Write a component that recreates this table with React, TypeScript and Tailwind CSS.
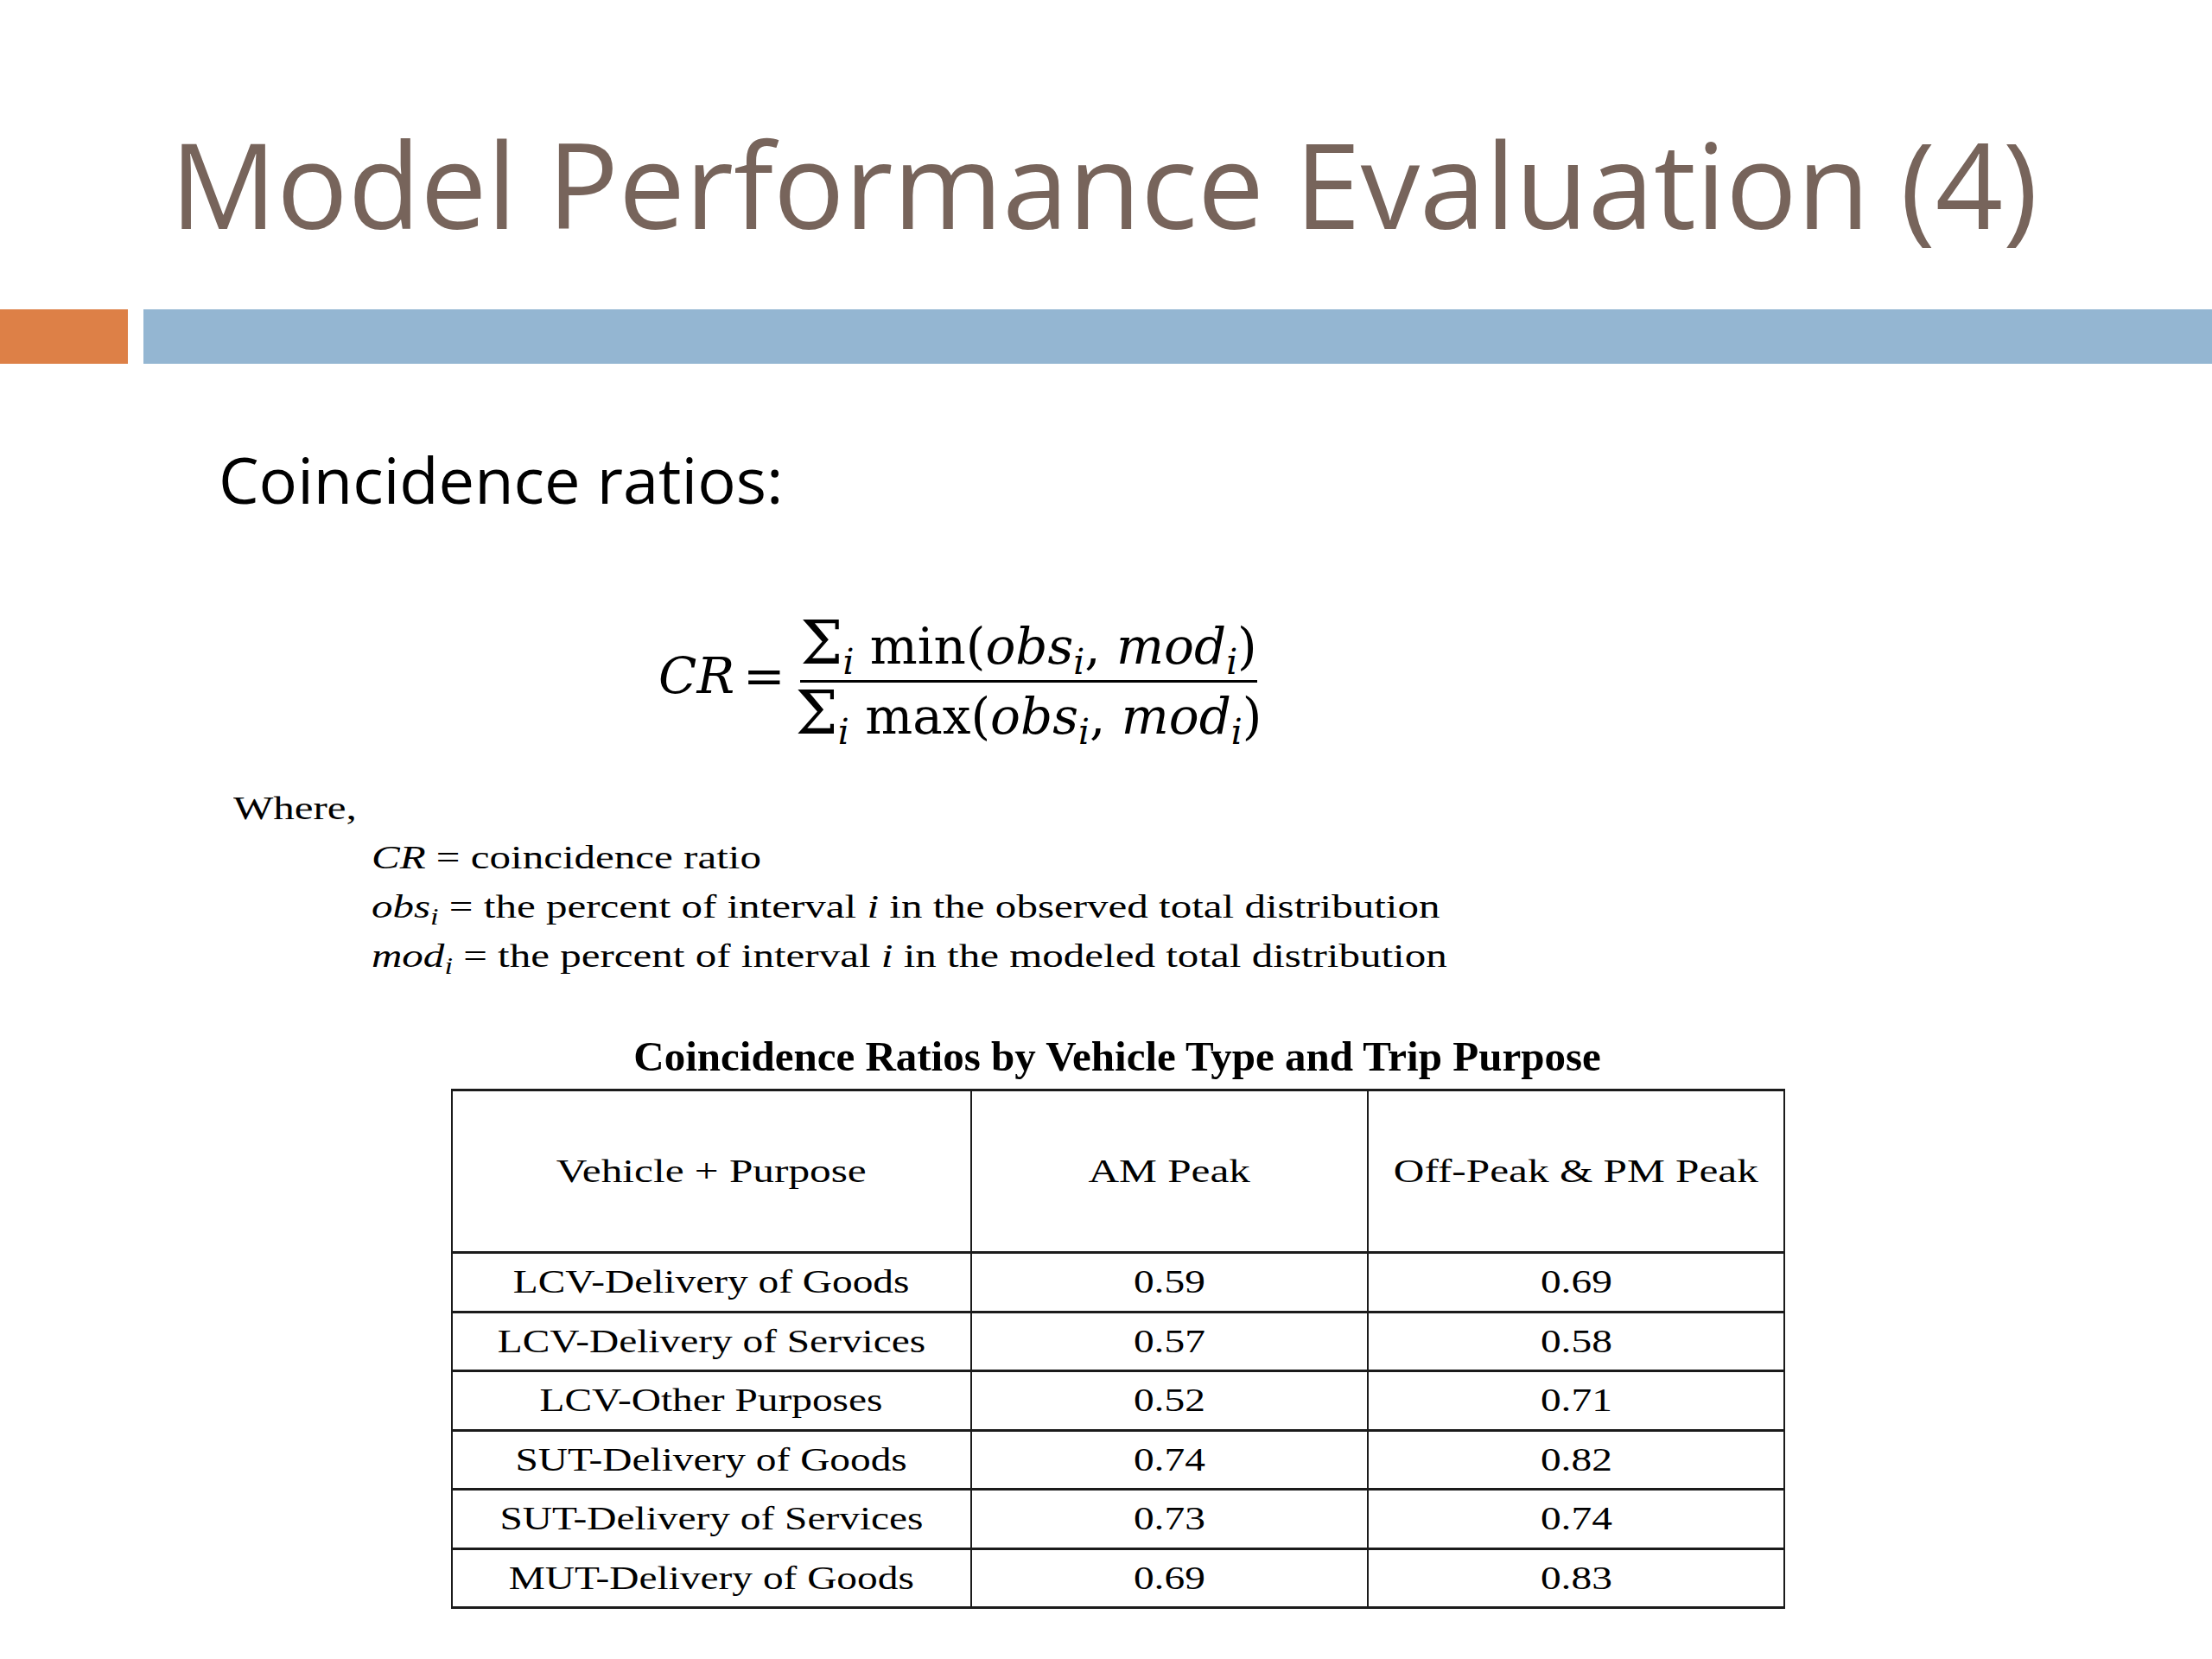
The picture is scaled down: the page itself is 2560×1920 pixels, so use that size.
const rows = [
  ["LCV-Delivery of Goods", "0.59", "0.69"],
  ["LCV-Delivery of Services", "0.57", "0.58"],
  ["LCV-Other Purposes", "0.52", "0.71"],
  ["SUT-Delivery of Goods", "0.74", "0.82"],
  ["SUT-Delivery of Services", "0.73", "0.74"],
  ["MUT-Delivery of Goods", "0.69", "0.83"],
];

function Sub({ children }: { children: React.ReactNode }) {
  return <span className="relative top-[0.3em] text-[0.7em] italic leading-none">{children}</span>;
}

function Cell({ children, header }: { children: React.ReactNode; header?: boolean }) {
  return (
    <td className={`border-x-2 border-y-[3px] border-[#1b1b1b] p-0 text-center align-middle ${header ? "text-[38.5px]" : "text-[37px]"}`}>
      <span className="inline-block scale-x-[1.28] leading-none">{children}</span>
    </td>
  );
}

function Sum() {
  return <span className="text-[1.2em] leading-[0]">Σ</span>;
}

export default function App() {
  return (
    <div className="h-[1920px] w-[2560px] overflow-hidden bg-white text-black">
      <h1 className="h-[358px] pl-[197px] pt-[144px] font-['Open_Sans',sans-serif] text-[137px] leading-none font-normal text-[#77645b]">
        Model Performance Evaluation (4)
      </h1>
      <div className="flex h-[63px] gap-[18px]">
        <div className="w-[148px] bg-[#dd8047]" />
        <div className="flex-1 bg-[#94b6d2]" />
      </div>

      <p className="mt-[97px] pl-[253px] font-['Open_Sans',sans-serif] text-[74px] leading-none">
        Coincidence ratios:
      </p>

      {/* formula */}
      <div className="ml-[762px] mt-[127px] flex items-start font-['DejaVu_Serif',serif] text-[58px] leading-none">
        <span className="mt-[34px] w-[98px] italic">CR</span>
        <span className="mt-[34px] w-[66px]">=</span>
        <div className="flex w-[529px] flex-col items-center">
          <div className="whitespace-nowrap">
            <Sum />
            <Sub>i</Sub> min(<i>obs</i>
            <Sub>i</Sub>, <i>mod</i>
            <Sub>i</Sub>)
          </div>
          <div className="mt-[10px] h-[3px] w-full bg-black" />
          <div className="mt-[10px] whitespace-nowrap">
            <Sum />
            <Sub>i</Sub> max(<i>obs</i>
            <Sub>i</Sub>, <i>mod</i>
            <Sub>i</Sub>)
          </div>
        </div>
      </div>

      {/* definitions */}
      <div className="ml-[270px] mt-[49px] w-fit origin-left scale-x-[1.29] font-['Liberation_Serif',serif] text-[38px] leading-[57px]">
        <p>Where,</p>
        <p className="ml-[124px]">
          <i>CR</i> = coincidence ratio
        </p>
        <p className="ml-[124px]">
          <i>obs</i>
          <Sub>i</Sub> = the percent of interval <i>i</i> in the observed total distribution
        </p>
        <p className="ml-[124px]">
          <i>mod</i>
          <Sub>i</Sub> = the percent of interval <i>i</i> in the modeled total distribution
        </p>
      </div>

      <div className="ml-[522px] mt-[63px] w-[1542px] font-['Liberation_Serif',serif]">
        <p className="text-center text-[49px] font-bold leading-none">
          Coincidence Ratios by Vehicle Type and Trip Purpose
        </p>
        <table className="mt-[13px] w-full table-fixed border-collapse">
          <colgroup>
            <col className="w-[601px]" />
            <col className="w-[459px]" />
            <col className="w-[482px]" />
          </colgroup>
          <thead>
            <tr className="h-[188px]">
              <Cell header>Vehicle + Purpose</Cell>
              <Cell header>AM Peak</Cell>
              <Cell header>Off-Peak &amp; PM Peak</Cell>
            </tr>
          </thead>
          <tbody>
            {rows.map((r) => (
              <tr key={r[0]} className="h-[68.5px]">
                <Cell>{r[0]}</Cell>
                <Cell>{r[1]}</Cell>
                <Cell>{r[2]}</Cell>
              </tr>
            ))}
          </tbody>
        </table>
      </div>
    </div>
  );
}
